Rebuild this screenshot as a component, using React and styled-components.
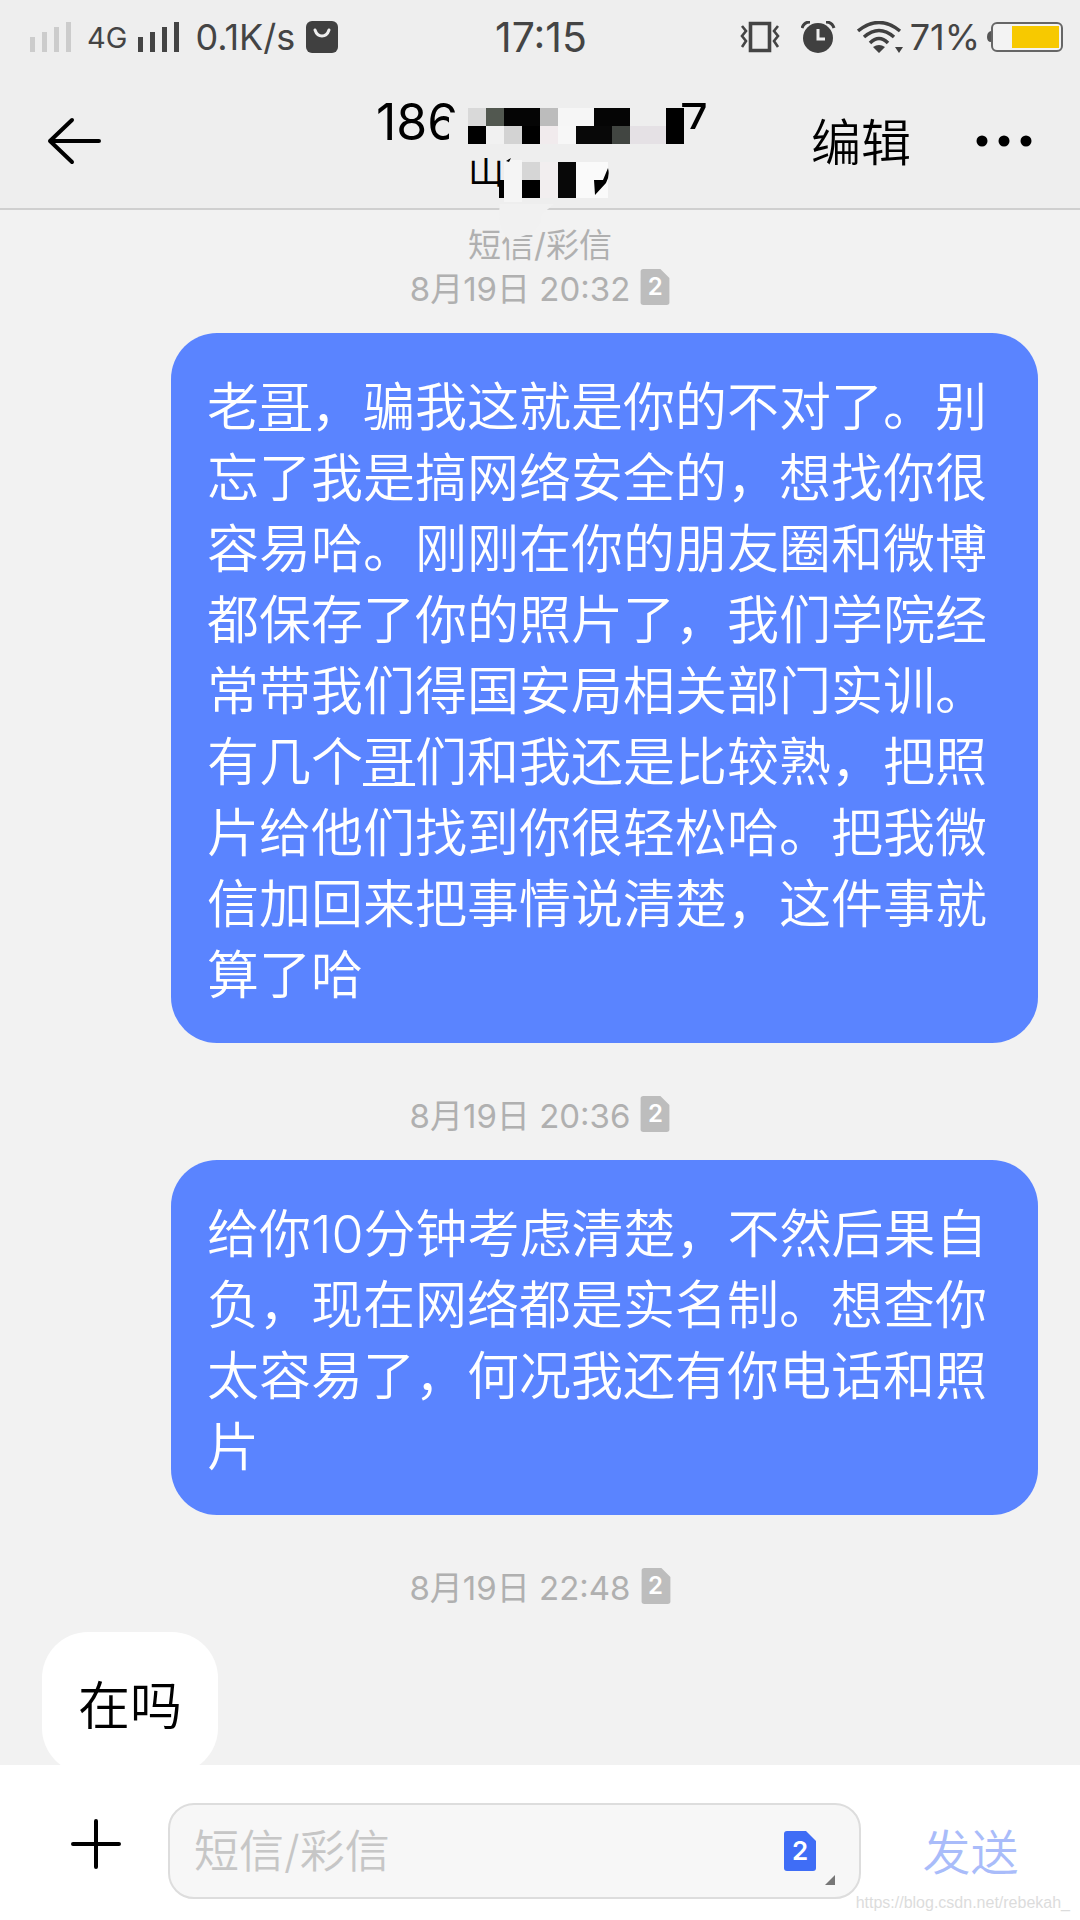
import { useState } from "react";
import styled, { createGlobalStyle } from "styled-components";

const messages = [
	{
		id: 1,
		time: "8月19日 20:32",
		mine: true,
		text: [
			"老",
			{ mark: "哥" },
			"，骗我这就是你的不对了。别忘了我是搞网络安全的，想找你很容易哈。刚刚在你的朋友圈和微博都保存了你的照片了，我们学院经常带我们得国安局相关部门实训。有几个",
			{ mark: "哥" },
			"们和我还是比较熟，把照片给他们找到你很轻松哈。把我微信加回来把事情说清楚，这件事就算了哈",
		],
	},
	{
		id: 2,
		time: "8月19日 20:36",
		mine: true,
		text: ["给你10分钟考虑清楚，不然后果自负，现在网络都是实名制。想查你太容易了，何况我还有你电话和照片"],
	},
	{ id: 3, time: "8月19日 22:48", mine: false, text: ["在吗"] },
];

// x, y, width, height, color
const mosaic = [
	[95, 24, 229, 50, "#eeeeee"],
	[89, 32, 9, 44, "#eeeeee"],
	[324, 45, 30, 20, "#eeeeee"],
	[108, 24, 18, 18, "#d9d9d9"],
	[126, 24, 18, 18, "#525850"],
	[144, 24, 36, 18, "#050505"],
	[180, 24, 18, 18, "#bcbcbc"],
	[198, 24, 36, 18, "#f6f6f6"],
	[234, 24, 36, 18, "#050505"],
	[306, 24, 18, 36, "#000000"],
	[108, 42, 18, 18, "#000000"],
	[126, 42, 18, 18, "#f1f1f1"],
	[144, 42, 18, 18, "#d3d3d3"],
	[162, 42, 18, 18, "#000000"],
	[180, 42, 18, 18, "#f1ebed"],
	[198, 42, 18, 18, "#f7f7f7"],
	[216, 42, 36, 18, "#080808"],
	[252, 42, 18, 18, "#414541"],
	[270, 42, 36, 18, "#e5e1e5"],
	[144, 76, 18, 42, "#f5f5f5"],
	[162, 78, 18, 18, "#d6d6d6"],
	[162, 96, 18, 18, "#000000"],
	[180, 78, 18, 36, "#f2eeef"],
	[198, 78, 18, 36, "#080808"],
	[216, 78, 32, 36, "#fafafa"],
	[139, 96, 5, 18, "#000000"],
];

function Signal({ color }) {
	return (
		<svg width="46" height="32" viewBox="0 0 46 32" fill={color}>
			<path d="M0 16h5v15H0zM12 11h5v20h-5zM24 6h5v25h-5zM36 1h5v30h-5z" />
		</svg>
	);
}

function SimIcon({ width, height, color }) {
	return (
		<svg width={width} height={height} viewBox="0 0 32 40" fill={color}>
			<path d="M3 0H22L32 10V37Q32 40 29 40H3Q0 40 0 37V3Q0 0 3 0Z" />
		</svg>
	);
}

function Sim({ small }) {
	return (
		<SimBox $small={small}>
			<SimIcon
				width={small ? 30 : 32}
				height={small ? 36 : 40}
				color={small ? "#bdbdbd" : "#3f6df6"}
			/>
			<span>2</span>
		</SimBox>
	);
}

function StatusBar() {
	return (
		<Status>
			<StatusLeft>
				<Signal color="#cccccc" />
				<Network>4G</Network>
				<Signal color="#444444" />
				<Speed>0.1K/s</Speed>
				<svg width="32" height="32" viewBox="0 0 32 32">
					<rect width="32" height="32" rx="6" fill="#404040" />
					<path d="M9 9Q11 15 16 15T23 9" fill="none" stroke="#eee" strokeWidth="3" strokeLinecap="round" />
				</svg>
			</StatusLeft>
			<Clock>17:15</Clock>
			<StatusRight>
				<svg width="55" height="32" viewBox="0 0 55 32" fill="none" stroke="#444">
					<path d="M10.500 2.500H29.500V29.500H10.500Z" strokeWidth="3.600" />
					<path d="M2 5L6 10L2 15L6 20L2 26M38 5L34 10L38 15L34 20L38 26" strokeWidth="2.600" />
				</svg>
				<svg width="50" height="32" viewBox="0 0 50 32">
					<circle cx="17" cy="17" r="15" fill="#404040" />
					<path d="M1 7Q3 1 9 1M33 7Q31 1 25 1" fill="none" stroke="#404040" strokeWidth="3" />
					<path d="M17 8V18H24" fill="none" stroke="#eee" strokeWidth="3" />
				</svg>
				<svg width="47" height="32" viewBox="0 0 47 32" fill="none" stroke="#404040" strokeWidth="3.500">
					<path d="M1 10Q22 -7 43 10M7 16Q22 3 37 16M13 22Q22 13 31 22" />
					<path d="M16 26Q22 22 28 26L22 32ZM38 26H46L42 32Z" fill="#404040" stroke="none" />
				</svg>
				<Speed>71%</Speed>
				<svg width="78" height="32" viewBox="0 0 78 32">
					<path d="M5 10Q1 11 1 16T5 21Z" fill="#555" />
					<rect x="6" y="2" width="70" height="28" rx="5" fill="#f3f3f3" stroke="#666" strokeWidth="2" />
					<rect x="26" y="5" width="47" height="22" fill="#f7c900" />
				</svg>
			</StatusRight>
		</Status>
	);
}

export default function App() {
	const [draft, setDraft] = useState("");

	return (
		<Page>
			<GlobalStyle />
			<Header>
				<StatusBar />
				<Nav>
					<IconButton aria-label="返回">
						<svg width="54" height="48" viewBox="0 0 54 48" fill="none" stroke="#000" strokeWidth="4" strokeLinecap="round" strokeLinejoin="round">
							<path d="M52 24H3M25 3L3 24L25 45" />
						</svg>
					</IconButton>
					<Title>
						<Phone>
							<span>186</span>
							<span>7</span>
						</Phone>
						<Place>山</Place>
						<Mosaic width="360" height="160" viewBox="0 0 360 160">
							{mosaic.map(([x, y, width, height, fill], index) => (
								<rect key={index} x={x} y={y} width={width} height={height} fill={fill} />
							))}
							<path d="M146 77L151 74L149 78ZM234 96H243L248 84Q250 92 246 99L235 111Z" fill="#000" />
							<path d="M140 120H194L182 130Q180 148 166 151L150 157Q136 145 140 120Z" fill="#f1f1f1" />
						</Mosaic>
					</Title>
					<Actions>
						<TextButton>编辑</TextButton>
						<IconButton aria-label="更多">
							<svg width="58" height="14" viewBox="0 0 58 14">
								<circle cx="7" cy="7" r="5.500" />
								<circle cx="29" cy="7" r="5.500" />
								<circle cx="51" cy="7" r="5.500" />
							</svg>
						</IconButton>
					</Actions>
				</Nav>
			</Header>

			<Chat>
				<Channel>短信/彩信</Channel>
				{messages.map((message) => (
					<Message key={message.id}>
						<Time>
							{message.time}
							<Sim small />
						</Time>
						<Bubble $mine={message.mine}>
							{message.text.map((part, index) =>
								part.mark ? <u key={index}>{part.mark}</u> : part
							)}
						</Bubble>
					</Message>
				))}
			</Chat>

			<Composer>
				<IconButton aria-label="添加">
					<svg width="50" height="64" viewBox="0 0 50 64" stroke="#000" strokeWidth="4" strokeLinecap="round">
						<path d="M25 2V48M2 25H48" />
					</svg>
				</IconButton>
				<Field>
					<input
						aria-label="短信/彩信"
						placeholder="短信/彩信"
						value={draft}
						onChange={(event) => setDraft(event.target.value)}
					/>
					<SimButton aria-label="选择SIM卡">
						<Sim />
						<svg width="10" height="10" viewBox="0 0 10 10">
							<path d="M10 0V10H0Z" fill="#777" />
						</svg>
					</SimButton>
				</Field>
				<SendButton>发送</SendButton>
				<Watermark>https://blog.csdn.net/rebekah_</Watermark>
			</Composer>
		</Page>
	);
}

const GlobalStyle = createGlobalStyle`
	* {
		box-sizing: border-box;
	}

	body {
		margin: 0;
		font-family: Inter, "Noto Sans CJK SC", sans-serif;
	}

	button, input {
		font-family: inherit;
		border: none;
		padding: 0;
		background: none;
	}

	svg {
		display: block;
		flex-shrink: 0;
	}
`;

const Page = styled.div`
	display: flex;
	flex-direction: column;
	height: 100vh;
	background-color: #f2f2f2;
`;

const Header = styled.header`
	background-color: #eeeeee;
	border-bottom: 2px solid #cfcfcf;
`;

const Status = styled.div`
	display: grid;
	grid-template-columns: minmax(0, 1fr) auto minmax(0, 1fr);
	align-items: center;
	height: 74px;
	padding: 0 16px 0 18px;
	color: #444444;
`;

const StatusLeft = styled.div`
	display: flex;
	align-items: center;
	gap: 11px;
	padding-left: 12px;
`;

const StatusRight = styled.div`
	display: flex;
	align-items: center;
	justify-content: flex-end;
	gap: 6px;
`;

const Network = styled.span`
	font-size: 29px;
`;

const Speed = styled.span`
	font-size: 36px;
`;

const Clock = styled.span`
	font-size: 41px;
`;

const Nav = styled.nav`
	display: grid;
	grid-template-columns: 1fr 360px 1fr;
	align-items: center;
	height: 134px;
	padding: 0 47px;
`;

const IconButton = styled.button`
	display: flex;
	align-items: center;
	cursor: pointer;
`;

const Title = styled.div`
	position: relative;
	align-self: start;
	padding-top: 20px;
`;

const Phone = styled.div`
	display: flex;
	justify-content: space-between;
	padding: 0 12px 0 16px;
	font-size: 50px;
	line-height: 56px;
`;

const Place = styled.div`
	width: 144px;
	margin: 0 auto;
	font-size: 36px;
	line-height: 42px;
`;

const Mosaic = styled.svg`
	position: absolute;
	top: 10px;
	left: 0;
`;

const Actions = styled.div`
	display: flex;
	align-items: center;
	justify-content: flex-end;
	gap: 64px;
`;

const TextButton = styled.button`
	padding-bottom: 4px;
	font-size: 50px;
	font-weight: 350;
	color: #000000;
	cursor: pointer;
`;

const Chat = styled.main`
	flex: 1;
	min-height: 0;
	overflow: hidden;
	padding: 14px 42px 0;
`;

const Channel = styled.p`
	margin: 0;
	font-size: 33px;
	line-height: 42px;
	text-align: center;
	color: #b0b0b0;
`;

const Message = styled.section`
	display: flex;
	flex-direction: column;
	margin-bottom: 50px;
`;

const Time = styled.div`
	display: flex;
	align-items: center;
	justify-content: center;
	gap: 10px;
	height: 42px;
	margin-bottom: 25px;
	font-size: 33px;
	color: #b0b0b0;
`;

const Bubble = styled.div`
	align-self: ${(props) => (props.$mine ? "flex-end" : "flex-start")};
	max-width: 867px;
	padding: 39px 36px 32px;
	border-radius: 46px;
	font-size: 52px;
	font-weight: 350;
	line-height: 71px;
	color: ${(props) => (props.$mine ? "#ffffff" : "#000000")};
	background-color: ${(props) => (props.$mine ? "#5a84ff" : "#ffffff")};

	u {
		text-decoration-thickness: 3px;
		text-underline-offset: 2px;
		text-decoration-skip-ink: none;
	}
`;

const SimBox = styled.span`
	display: grid;
	place-items: center;

	> * {
		grid-area: 1 / 1;
	}

	span {
		font-size: ${(props) => (props.$small ? "24px" : "26px")};
		font-weight: 600;
		line-height: 1;
		color: #ffffff;
	}
`;

const Composer = styled.footer`
	position: relative;
	display: grid;
	grid-template-columns: 144px minmax(0, 1fr) 219px;
	align-items: center;
	padding: 38px 0 21px 24px;
	background-color: #ffffff;

	> ${IconButton} {
		justify-self: center;
	}
`;

const Field = styled.div`
	display: flex;
	align-items: center;
	height: 96px;
	padding: 0 24px;
	border: 2px solid #dddddd;
	border-radius: 26px;
	background-color: #f7f7f7;

	input {
		flex: 1;
		min-width: 0;
		font-size: 45px;
		font-weight: 350;
	}

	input::placeholder {
		color: #c6c6c6;
	}
`;

const SimButton = styled.button`
	display: flex;
	align-items: flex-end;
	gap: 9px;

	> svg {
		margin-bottom: -14px;
	}
`;

const SendButton = styled(TextButton)`
	font-size: 48px;
	color: #a9bcfa;
`;

const Watermark = styled.span`
	position: absolute;
	right: 10px;
	bottom: 8px;
	font-family: "Liberation Sans", sans-serif;
	font-size: 16px;
	color: #dcdcdc;
`;
